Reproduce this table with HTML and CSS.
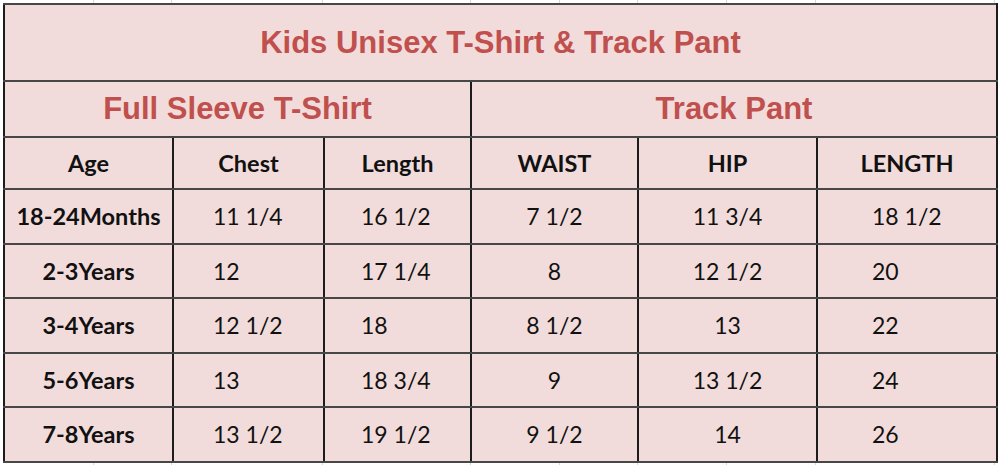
FILE: index.html
```html
<!DOCTYPE html>
<html>
<head>
<meta charset="utf-8">
<link rel="stylesheet" href="styles.css">
<title>Kids Unisex T-Shirt &amp; Track Pant</title>
</head>
<body>
<div class="sheet">
  <div class="strip top">
    <span class="g w94"></span><span class="g w78"></span><span class="g w151"></span><span class="g w148"></span><span class="g w89"></span><span class="g w78"></span><span class="g w89"></span><span class="g w89"></span><span class="g w179"></span>
  </div>
  <div class="table-wrap">
    <table class="size-table">
      <colgroup>
        <col class="c-age"><col class="c-chest"><col class="c-length"><col class="c-waist"><col class="c-hip"><col class="c-plength">
      </colgroup>
      <tr class="r-title"><td colspan="6" class="title">Kids Unisex T-Shirt &amp; Track Pant</td></tr>
      <tr class="r-group"><td colspan="3" class="title">Full Sleeve T-Shirt</td><td colspan="3" class="title">Track Pant</td></tr>
      <tr class="r-head"><th>Age</th><th>Chest</th><th>Length</th><th>WAIST</th><th>HIP</th><th>LENGTH</th></tr>
      <tr class="r-data"><th>18-24Months</th><td class="l chest">11 1/4</td><td class="l len">16 1/2</td><td>7 1/2</td><td>11 3/4</td><td class="l plen">18 1/2</td></tr>
      <tr class="r-data"><th>2-3Years</th><td class="l chest">12</td><td class="l len">17 1/4</td><td>8</td><td>12 1/2</td><td class="l plen">20</td></tr>
      <tr class="r-data"><th>3-4Years</th><td class="l chest">12 1/2</td><td class="l len">18</td><td>8 1/2</td><td>13</td><td class="l plen">22</td></tr>
      <tr class="r-data"><th>5-6Years</th><td class="l chest">13</td><td class="l len">18 3/4</td><td>9</td><td>13 1/2</td><td class="l plen">24</td></tr>
      <tr class="r-data"><th>7-8Years</th><td class="l chest">13 1/2</td><td class="l len">19 1/2</td><td>9 1/2</td><td>14</td><td class="l plen">26</td></tr>
    </table>
  </div>
  <div class="strip bottom">
    <span class="g w94"></span><span class="g w78"></span><span class="g w151"></span><span class="g w148"></span><span class="g w89"></span><span class="g w78"></span><span class="g w89"></span><span class="g w89"></span><span class="g w179"></span>
  </div>
</div>
</body>
</html>
```
FILE: styles.css
```css
html, body {
  margin: 0;
  padding: 0;
  background: #ffffff;
}
.sheet {
  width: 1000px;
  height: 465px;
  overflow: hidden;
}
.strip {
  display: flex;
  height: 3px;
}
.strip.bottom {
  height: 6px;
}
.g {
  display: block;
  height: 100%;
  border-right: 1px solid #d9d9d9;
  box-sizing: border-box;
  flex: none;
}
.w94 { width: 94px; }
.w78 { width: 78px; }
.w151 { width: 151px; }
.w148 { width: 148px; }
.w89 { width: 89px; }
.w179 { width: 179px; }

.table-wrap {
  padding-left: 3px;
}
.size-table {
  border-collapse: collapse;
  table-layout: fixed;
  width: 993px;
  background: #f2dcdb;
  font-family: Lato, "Open Sans", sans-serif;
  color: #111111;
}
.c-age { width: 169px; }
.c-chest { width: 151px; }
.c-length { width: 147px; }
.c-waist { width: 167px; }
.c-hip { width: 179px; }
.c-plength { width: 180px; }

.size-table td, .size-table th {
  border-top: 2px solid #474747;
  border-bottom: 2px solid #474747;
  border-left: 2px solid #1c1c1c;
  border-right: 2px solid #1c1c1c;
  padding: 0;
  text-align: center;
  vertical-align: middle;
  white-space: nowrap;
  overflow: hidden;
}
.size-table td {
  font-size: 23px;
  font-weight: 400;
}
.size-table th {
  font-size: 23.5px;
  font-weight: 700;
}
.size-table td.title {
  font-family: "Liberation Sans", Arial, sans-serif;
  font-weight: 700;
  font-size: 31px;
  color: #c0504d;
}
.r-title { height: 77px; }
.r-group { height: 56px; }
.r-head { height: 52px; }
.r-data { height: 54.5px; }

.size-table td.l { text-align: left; }
.size-table td.chest { padding-left: 39px; }
.size-table td.len { padding-left: 36px; }
.size-table td.plen { padding-left: 54px; }
```
